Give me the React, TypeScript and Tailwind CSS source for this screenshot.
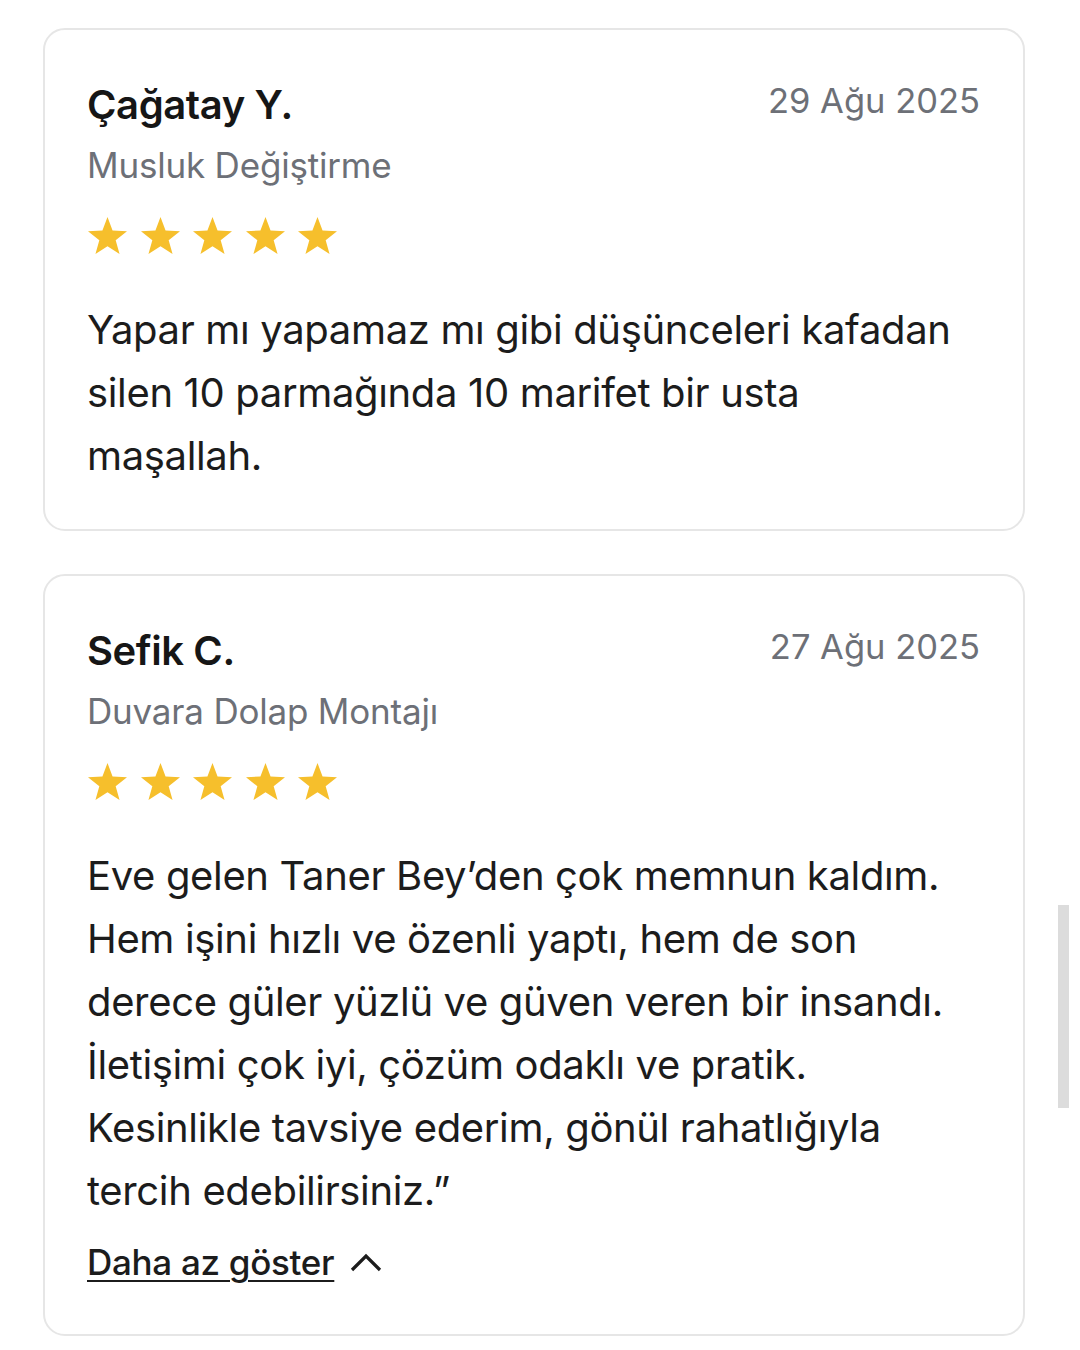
import React from "react";

const reviews = [
  {
    name: "Çağatay Y.",
    date: "29 Ağu 2025",
    service: "Musluk Değiştirme",
    text: "Yapar mı yapamaz mı gibi düşünceleri kafadan silen 10 parmağında 10 marifet bir usta maşallah.",
    expanded: false,
  },
  {
    name: "Sefik C.",
    date: "27 Ağu 2025",
    service: "Duvara Dolap Montajı",
    text: "Eve gelen Taner Bey’den çok memnun kaldım. Hem işini hızlı ve özenli yaptı, hem de son derece güler yüzlü ve güven veren bir insandı. İletişimi çok iyi, çözüm odaklı ve pratik. Kesinlikle tavsiye ederim, gönül rahatlığıyla tercih edebilirsiniz.”",
    expanded: true,
  },
];

function Star() {
  return (
    <svg viewBox="0 0 40 37" className="w-[41px] h-[38px]" fill="#f6bf2c">
      <polygon points="20,0 24.94,13.2 39.02,13.82 27.98,22.6 31.76,36.18 20,28.4 8.24,36.18 12.02,22.6 0.98,13.82 15.06,13.2" />
    </svg>
  );
}

export default function App() {
  return (
    <div
      className="min-h-[1350px] bg-white pt-[28px] relative"
      style={{ fontFamily: "Inter, 'Noto Sans', sans-serif" }}
    >
      <div className="flex flex-col gap-[43px] ml-[43px] w-[982px]">
        {reviews.map((r) => (
          <div
            key={r.name}
            className="border-2 border-[#e6e6e6] rounded-[22px] px-[43px] pt-[51px] pb-[42px]"
          >
            <div className="flex justify-between items-start">
              <div className="text-[40px] leading-[48px] font-semibold text-[#161616] tracking-[-0.4px] -ml-[1px]">
                {r.name}
              </div>
              <div className="text-[34.5px] leading-[44px] text-[#6d7077] -mt-[2px]">
                {r.date}
              </div>
            </div>
            <div className="mt-[14px] text-[35px] leading-[44px] text-[#6d7077] tracking-[-0.2px] -ml-[1px]">
              {r.service}
            </div>
            <div className="mt-[30px] flex gap-[11.5px] -ml-[1px]">
              <Star />
              <Star />
              <Star />
              <Star />
              <Star />
            </div>
            <p className="mt-[43px] text-[40px] leading-[63px] text-[#1c1c1c] tracking-[-0.35px] -ml-[1px]">
              {r.text}
            </p>
            {r.expanded && (
              <div className="mt-[18px] mb-[8px] flex items-center gap-[16px] -ml-[1px]">
                <span className="text-[35px] leading-[44px] font-medium text-[#1c1c1c] underline decoration-2 underline-offset-[5px] tracking-[-0.3px]">
                  Daha az göster
                </span>
                <svg viewBox="0 0 32 20" className="w-[32px] h-[20px]" fill="none" stroke="#1c1c1c" strokeWidth="3.2">
                  <path d="M2 18L16 4l14 14" />
                </svg>
              </div>
            )}
          </div>
        ))}
      </div>
      <div className="absolute left-[1058px] top-[905px] w-[11px] h-[203px] bg-[#dcdcdc]" />
    </div>
  );
}
